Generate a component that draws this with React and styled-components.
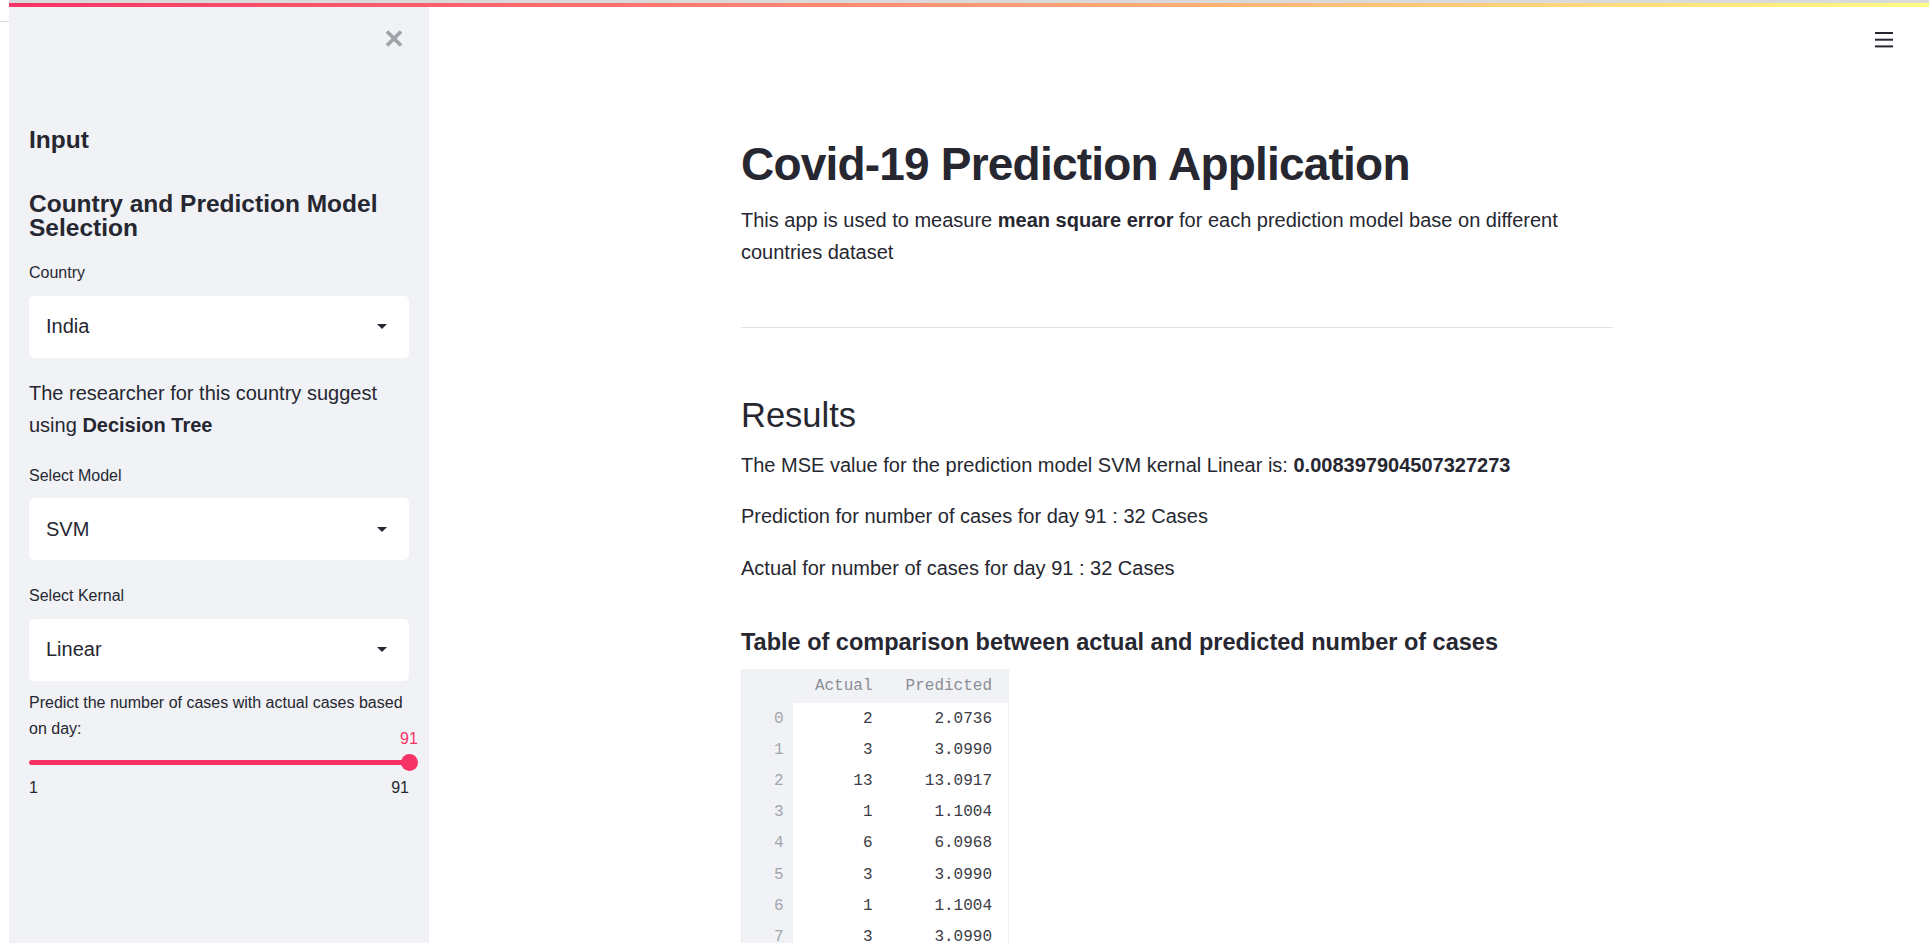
import React from "react";
import styled, { createGlobalStyle } from "styled-components";

const GlobalStyle = createGlobalStyle`
  *, *::before, *::after { box-sizing: border-box; }
  html, body { margin: 0; padding: 0; height: 100%; overflow: hidden; background: #ffffff; }
  body { font-family: "Liberation Sans", Arial, sans-serif; color: #262730; }
  #root { height: 100%; }
`;

const Page = styled.div`
  position: relative;
  display: flex;
  height: 100vh;
  overflow: hidden;
`;

const Decoration = styled.div`
  position: absolute;
  top: 0;
  left: 9px;
  right: 0;
  height: 7px;
  border-top: 3px solid #dadada;
  background: linear-gradient(90deg, #f63366, #fffd80);
  z-index: 5;
`;

const EdgeStrip = styled.div`
  flex: 0 0 9px;
  background: linear-gradient(#ffffff 0 21px, #dcdcdc 21px 22px, #ffffff 22px);
`;

/* ---------- Sidebar ---------- */

const Sidebar = styled.aside`
  flex: 0 0 420px;
  background: #f0f2f6;
  padding: 0 20px;
  display: flex;
  flex-direction: column;
`;

const SidebarTop = styled.div`
  height: 77px;
  display: flex;
  align-items: center;
  justify-content: flex-end;
  margin-right: 6px;
`;

const CloseButton = styled.button`
  border: 0;
  padding: 0;
  background: none;
  display: flex;
  color: #a0a2aa;
  cursor: pointer;
`;

const SideHeading = styled.h2`
  margin: ${(p) => p.$mt}px 0 0;
  font-size: 24.5px;
  font-weight: 700;
  line-height: ${(p) => p.$lh}px;
  color: #262730;
`;

const FieldLabel = styled.div`
  margin-top: ${(p) => p.$mt}px;
  font-size: 16px;
  line-height: 25.6px;
  color: #262730;
`;

const SelectBox = styled.div`
  margin-top: 10px;
  height: 62px;
  background: #ffffff;
  border-radius: 5px;
  display: flex;
  align-items: center;
  justify-content: space-between;
  padding: 0 22px 0 17px;
  font-size: 20px;
  color: #262730;
`;

const SideText = styled.p`
  margin: ${(p) => p.$mt}px 0 0;
  font-size: 20px;
  line-height: 32px;
  color: #262730;
`;

const SliderArea = styled.div`
  position: relative;
  height: 34px;
`;

const Track = styled.div`
  margin-top: 18.8px;
  height: 5px;
  border-radius: 3px;
  background: #d5dae5;
  overflow: hidden;
`;

const TrackFill = styled.div`
  height: 100%;
  background: #f63366;
`;

const Thumb = styled.div`
  position: absolute;
  top: 12.8px;
  width: 17px;
  height: 17px;
  margin-left: -8.5px;
  border-radius: 50%;
  background: #f63366;
`;

const ThumbValue = styled.div`
  position: absolute;
  top: -9.7px;
  transform: translateX(-50%);
  font-size: 16px;
  line-height: 16px;
  color: #f63366;
  white-space: nowrap;
`;

const TickRow = styled.div`
  display: flex;
  justify-content: space-between;
  font-size: 16px;
  line-height: 25.6px;
  color: #262730;
`;

/* ---------- Main ---------- */

const Main = styled.main`
  flex: 1;
  min-width: 0;
  display: flex;
  flex-direction: column;
  padding-right: 4px;
`;

const TopBar = styled.header`
  height: 80px;
  flex: 0 0 80px;
  display: flex;
  justify-content: flex-end;
  align-items: flex-start;
  padding: 32px 32px 0 0;
`;

const MenuButton = styled.button`
  border: 0;
  padding: 0;
  background: none;
  display: flex;
  color: #262730;
  cursor: pointer;
`;

const Block = styled.div`
  width: 100%;
  max-width: 872px;
  margin: 0 auto;
  padding-top: 56.5px;
`;

const Title = styled.h1`
  margin: 0;
  font-size: 46px;
  line-height: 55.2px;
  font-weight: 700;
  letter-spacing: -0.8px;
  color: #262730;
`;

const Text = styled.p`
  margin: ${(p) => p.$mt}px 0 0;
  font-size: 20px;
  line-height: 32px;
  color: #262730;
`;

const Divider = styled.hr`
  margin: 59.2px 0 0;
  border: 0;
  height: 1px;
  background: #e1e3e8;
`;

const SectionTitle = styled.h2`
  margin: 65.7px 0 0;
  font-size: 34.5px;
  line-height: 42px;
  font-weight: 400;
  color: #262730;
`;

const SubTitle = styled.h3`
  margin: 43.7px 0 0;
  font-size: 23.5px;
  line-height: 28.2px;
  font-weight: 700;
  color: #262730;
`;

const DataTable = styled.table`
  margin-top: 13px;
  border-collapse: collapse;
  table-layout: fixed;
  font-family: "Liberation Mono", "DejaVu Sans Mono", monospace;
  font-size: 16px;
  border-left: 1px solid #e6e9ef;
  border-right: 1px solid #f0f2f6;
`;

const HeadCell = styled.th`
  width: ${(p) => p.$w}px;
  height: 34px;
  padding: 0 16px 0 0;
  text-align: right;
  font-weight: 400;
  color: #8b8d94;
  background: #f0f2f6;
`;

const IndexCell = styled.th`
  height: 31.2px;
  padding: 0 9px 0 0;
  text-align: right;
  font-weight: 400;
  color: #a3a5ab;
  background: #f0f2f6;
`;

const Cell = styled.td`
  height: 31.2px;
  padding: 0 16px 0 0;
  text-align: right;
  color: #3b3c45;
  background: #ffffff;
`;

/* ---------- Icons ---------- */

const CloseIcon = () => (
  <svg width="18" height="17" viewBox="0 0 18 17" aria-hidden="true">
    <path d="M2 1.5 L16 15.5 M16 1.5 L2 15.5" stroke="currentColor" strokeWidth="3.6" fill="none" />
  </svg>
);

const Caret = () => (
  <svg width="10" height="5" viewBox="0 0 10 5" aria-hidden="true">
    <path d="M0 0 H10 L5 5 Z" fill="#262730" />
  </svg>
);

const MenuIcon = () => (
  <svg width="18" height="16" viewBox="0 0 18 16" aria-hidden="true">
    <rect x="0" y="0" width="18" height="2" fill="currentColor" />
    <rect x="0" y="6.7" width="18" height="2" fill="currentColor" />
    <rect x="0" y="13.4" width="18" height="2" fill="currentColor" />
  </svg>
);

/* ---------- Data ---------- */

const rows = [
  [0, 2, "2.0736"],
  [1, 3, "3.0990"],
  [2, 13, "13.0917"],
  [3, 1, "1.1004"],
  [4, 6, "6.0968"],
  [5, 3, "3.0990"],
  [6, 1, "1.1004"],
  [7, 3, "3.0990"],
];

const slider = { min: 1, max: 91, value: 91 };

export default function App() {
  const pct = ((slider.value - slider.min) / (slider.max - slider.min)) * 100;
  return (
    <>
      <GlobalStyle />
      <Page>
        <Decoration />
        <EdgeStrip />
        <Sidebar>
          <SidebarTop>
            <CloseButton aria-label="Close sidebar">
              <CloseIcon />
            </CloseButton>
          </SidebarTop>
          <SideHeading $mt={47.8} $lh={29.4}>Input</SideHeading>
          <SideHeading $mt={37.9} $lh={24.3}>Country and Prediction Model Selection</SideHeading>

          <FieldLabel $mt={19.3}>Country</FieldLabel>
          <SelectBox>
            <span>India</span>
            <Caret />
          </SelectBox>

          <SideText $mt={19.5}>
            The researcher for this country suggest using <strong>Decision Tree</strong>
          </SideText>

          <FieldLabel $mt={21.6}>Select Model</FieldLabel>
          <SelectBox>
            <span>SVM</span>
            <Caret />
          </SelectBox>

          <FieldLabel $mt={23.1}>Select Kernal</FieldLabel>
          <SelectBox>
            <span>Linear</span>
            <Caret />
          </SelectBox>

          <FieldLabel $mt={9}>Predict the number of cases with actual cases based on day:</FieldLabel>
          <SliderArea>
            <ThumbValue style={{ left: `${pct}%` }}>{slider.value}</ThumbValue>
            <Track>
              <TrackFill style={{ width: `${pct}%` }} />
            </Track>
            <Thumb style={{ left: `${pct}%` }} />
          </SliderArea>
          <TickRow>
            <span>{slider.min}</span>
            <span>{slider.max}</span>
          </TickRow>
        </Sidebar>

        <Main>
          <TopBar>
            <MenuButton aria-label="Menu">
              <MenuIcon />
            </MenuButton>
          </TopBar>
          <Block>
            <Title>Covid-19 Prediction Application</Title>
            <Text $mt={12.1}>
              This app is used to measure <strong>mean square error</strong> for each prediction model base on
              different countries dataset
            </Text>
            <Divider />
            <SectionTitle>Results</SectionTitle>
            <Text $mt={13.2}>
              The MSE value for the prediction model SVM kernal Linear is: <strong>0.008397904507327273</strong>
            </Text>
            <Text $mt={19.6}>Prediction for number of cases for day 91 : 32 Cases</Text>
            <Text $mt={19.7}>Actual for number of cases for day 91 : 32 Cases</Text>
            <SubTitle>Table of comparison between actual and predicted number of cases</SubTitle>
            <DataTable>
              <thead>
                <tr>
                  <HeadCell $w={51} />
                  <HeadCell $w={96}>Actual</HeadCell>
                  <HeadCell $w={120}>Predicted</HeadCell>
                </tr>
              </thead>
              <tbody>
                {rows.map(([i, a, p]) => (
                  <tr key={i}>
                    <IndexCell>{i}</IndexCell>
                    <Cell>{a}</Cell>
                    <Cell>{p}</Cell>
                  </tr>
                ))}
              </tbody>
            </DataTable>
          </Block>
        </Main>
      </Page>
    </>
  );
}
